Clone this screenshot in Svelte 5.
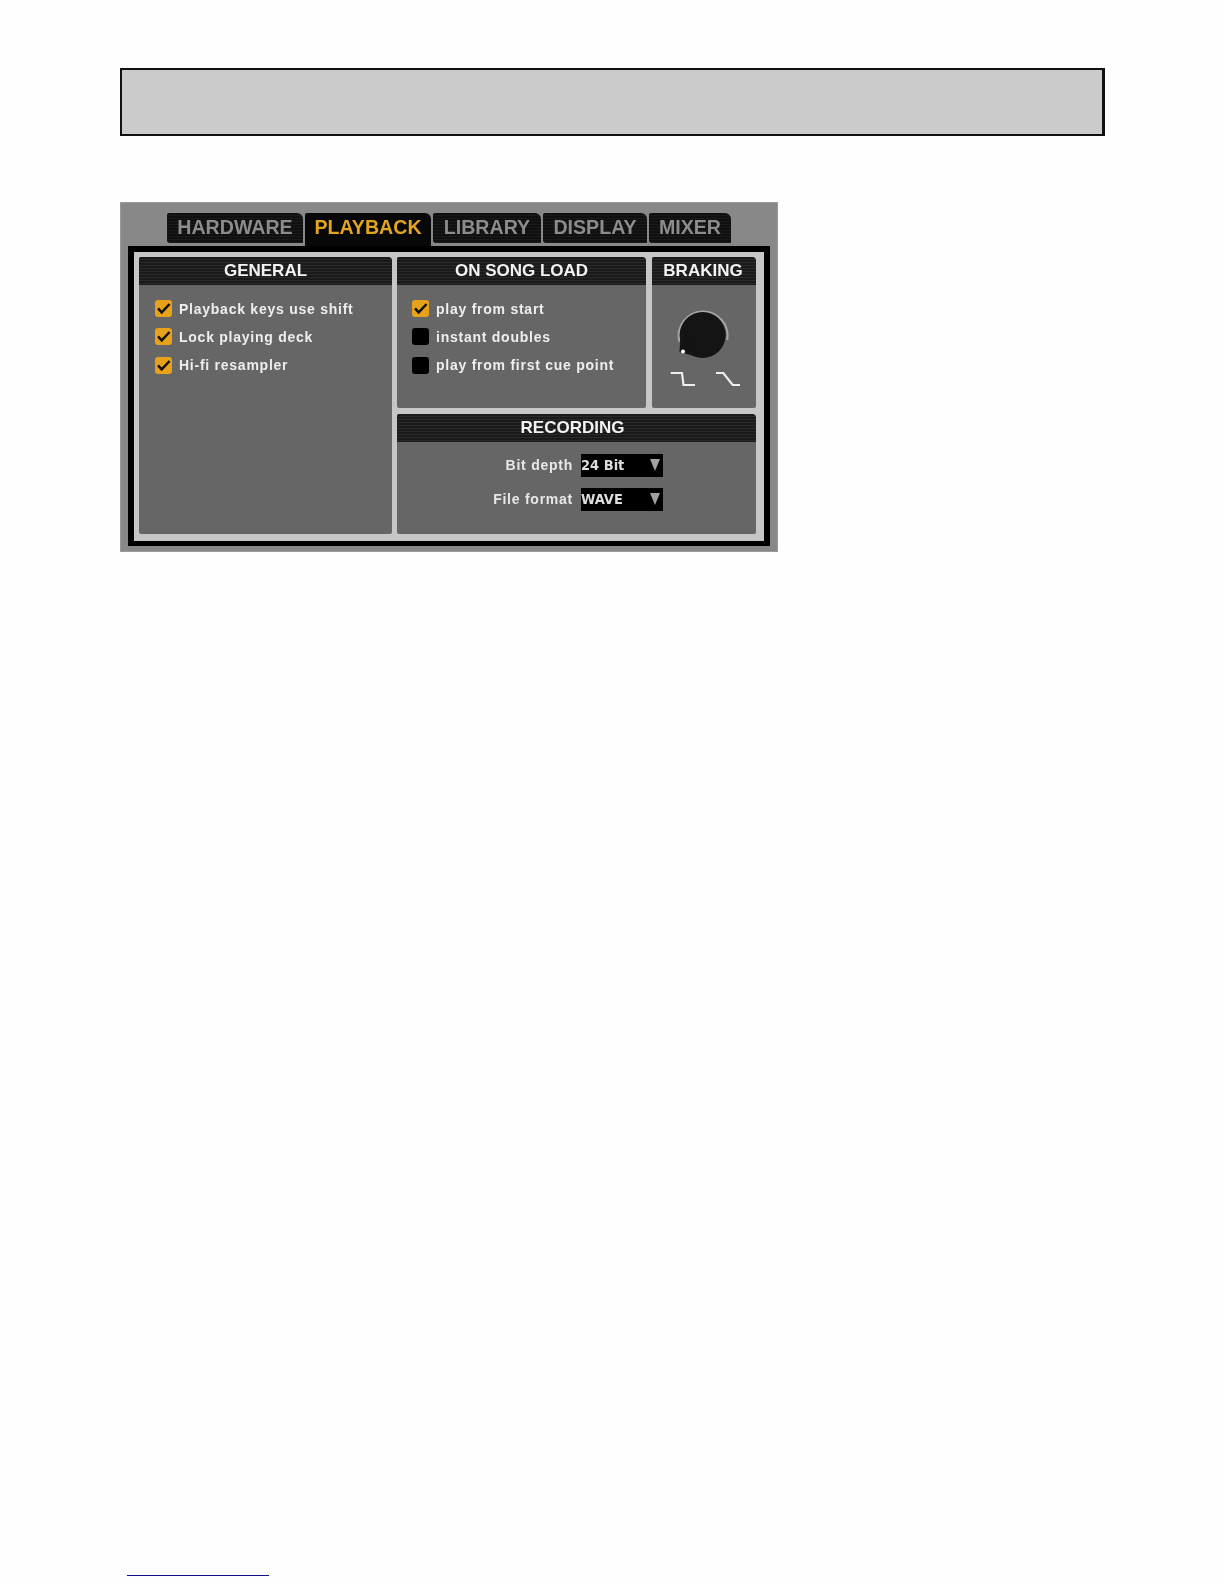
<script>
  const tabs = [
    { label: "HARDWARE", width: 136 },
    { label: "PLAYBACK", width: 126 },
    { label: "LIBRARY", width: 108 },
    { label: "DISPLAY", width: 104 },
    { label: "MIXER", width: 82 }
  ];
  const general = [
    { label: "Playback keys use shift", on: true },
    { label: "Lock playing deck", on: true },
    { label: "Hi-fi resampler", on: true }
  ];
  const songLoad = [
    { label: "play from start", on: true },
    { label: "instant doubles", on: false },
    { label: "play from first cue point", on: false }
  ];
  const selects = [
    { label: "Bit depth", value: "24 Bit" },
    { label: "File format", value: "WAVE" }
  ];
</script>

{#snippet option(item)}
  <div class="option">
    <span class="check" class:on={item.on}>
      {#if item.on}
        <svg viewBox="0 0 17 17" width="17" height="17" aria-hidden="true">
          <path d="M3 8.3 L6.7 12.4 L14.6 4" fill="none" stroke="#111" stroke-width="2.5" />
        </svg>
      {/if}
    </span>
    <span>{item.label}</span>
  </div>
{/snippet}

<main class="page">
  <div class="banner"></div>

  <section class="prefs">
    <nav class="tabs">
      {#each tabs as tab}
        <div class="tab" class:active={tab.label === "PLAYBACK"} style:width="{tab.width}px">{tab.label}</div>
      {/each}
    </nav>

    <div class="frame">
      <div class="grid">
        <div class="panel general">
          <h2>GENERAL</h2>
          <div class="options">
            {#each general as item}{@render option(item)}{/each}
          </div>
        </div>

        <div class="panel song">
          <h2>ON SONG LOAD</h2>
          <div class="options">
            {#each songLoad as item}{@render option(item)}{/each}
          </div>
        </div>

        <div class="panel braking">
          <h2>BRAKING</h2>
          <svg viewBox="0 0 104 123" width="104" height="123" aria-hidden="true">
            <path d="M27.3 56.7 A24.5 24.5 0 1 1 75.3 55" fill="none" stroke="#a6a6a6" stroke-width="2" />
            <circle cx="50.7" cy="50" r="23" fill="#141414" />
            <path d="M29 42 L27.5 67 L46 72 Z" fill="#141414" />
            <circle cx="31" cy="66.5" r="2" fill="#fff" />
            <path d="M18.7 88 H30 L31.5 100 H43" fill="none" stroke="#eee" stroke-width="2.2" />
            <path d="M64 88 H71.3 L80.7 100 H88" fill="none" stroke="#eee" stroke-width="2.2" />
          </svg>
        </div>

        <div class="panel recording">
          <h2>RECORDING</h2>
          <div class="fields">
            {#each selects as field}
              <div class="field">
                <span class="field-label">{field.label}</span>
                <div class="select">
                  <span>{field.value}</span>
                  <i class="arrow"></i>
                </div>
              </div>
            {/each}
          </div>
        </div>
      </div>
    </div>
  </section>

  <div class="link-rule"></div>
</main>

<style>
  :global(body) {
    background: #fefefe;
  }
  .page {
    position: relative;
    height: 1584px;
    padding: 68px 0 0 120px;
    box-sizing: border-box;
    font-family: "Liberation Sans", Arial, sans-serif;
  }
  .banner {
    width: 985px;
    height: 68px;
    box-sizing: border-box;
    border: 2px solid #111;
    border-right-width: 3px;
    background: #cbcbcb;
  }
  .prefs {
    width: 658px;
    height: 350px;
    margin-top: 66px;
    box-sizing: border-box;
    padding: 10px 7px 6px;
    background: #888;
    border: 1px solid #9a9a9a;
    filter: blur(0.5px);
  }
  .tabs {
    display: flex;
    gap: 2px;
    height: 33px;
    padding-left: 39px;
    align-items: flex-start;
  }
  .tab {
    height: 30px;
    background: repeating-linear-gradient(#101010 0 2px, #1a1a1a 2px 3px);
    color: #8c8c8c;
    font-size: 19.6px;
    font-weight: 700;
    line-height: 28px;
    text-align: center;
    border-radius: 2px 6px 0 3px;
    white-space: nowrap;
  }
  .tab.active {
    height: 33px;
    color: #e2a520;
    background: #080808;
    border-radius: 2px 6px 0 0;
  }
  .frame {
    height: 300px;
    box-sizing: border-box;
    border: 6px solid #000;
    border-bottom-width: 5px;
    background: #c6c6c6;
    padding: 5px 9px 7px 5px;
  }
  .grid {
    display: grid;
    grid-template-columns: 253px 249px 105px;
    grid-template-rows: 151px 120px;
    column-gap: 5px;
    row-gap: 6px;
  }
  .panel {
    background: #666;
    border-radius: 2px 4px 2px 2px;
    overflow: hidden;
  }
  .general {
    grid-row: span 2;
  }
  .song .options {
    padding-left: 15px;
  }
  .braking {
    margin-left: 1px;
  }
  .braking h2 {
    padding-right: 2px;
  }
  .braking svg {
    display: block;
  }
  .recording {
    grid-column: span 2;
  }
  .recording h2 {
    padding-right: 8px;
  }
  h2 {
    margin: 0;
    height: 28px;
    background: repeating-linear-gradient(#1a1a1a 0 2px, #2a2a2a 2px 3px);
    color: #f2f2f2;
    font-size: 17px;
    font-weight: 700;
    line-height: 28px;
    text-align: center;
  }
  .options {
    display: flex;
    flex-direction: column;
    gap: 11.3px;
    padding: 15px 0 0 16px;
  }
  .option {
    display: flex;
    align-items: center;
    gap: 7px;
    height: 17px;
    color: #eee;
    font-size: 14px;
    font-weight: 700;
    letter-spacing: 0.75px;
    white-space: nowrap;
  }
  .check {
    width: 17px;
    height: 17px;
    border-radius: 3px;
    background: #000;
  }
  .check.on {
    background: #e8a11a;
  }
  .check svg {
    display: block;
  }
  .fields {
    display: flex;
    flex-direction: column;
    gap: 11px;
    padding-top: 12px;
  }
  .field {
    display: grid;
    grid-template-columns: 176px auto;
    gap: 8px;
    align-items: center;
  }
  .field-label {
    color: #e8e8e8;
    font-size: 14px;
    font-weight: 700;
    letter-spacing: 0.75px;
    text-align: right;
    padding-bottom: 1px;
  }
  .select {
    position: relative;
    width: 82px;
    height: 23px;
    background: #000;
    color: #ddd;
    font-family: "DejaVu Sans", sans-serif;
    font-stretch: condensed;
    font-size: 14.5px;
    font-weight: 700;
    line-height: 23px;
    white-space: nowrap;
  }
  .arrow {
    position: absolute;
    right: 3px;
    top: 5px;
    border-left: 5.5px solid transparent;
    border-right: 5.5px solid transparent;
    border-top: 12px solid #a2a2a2;
  }
  .link-rule {
    position: absolute;
    left: 127px;
    top: 1575px;
    width: 142px;
    height: 1px;
    background: #10108c;
  }
</style>
